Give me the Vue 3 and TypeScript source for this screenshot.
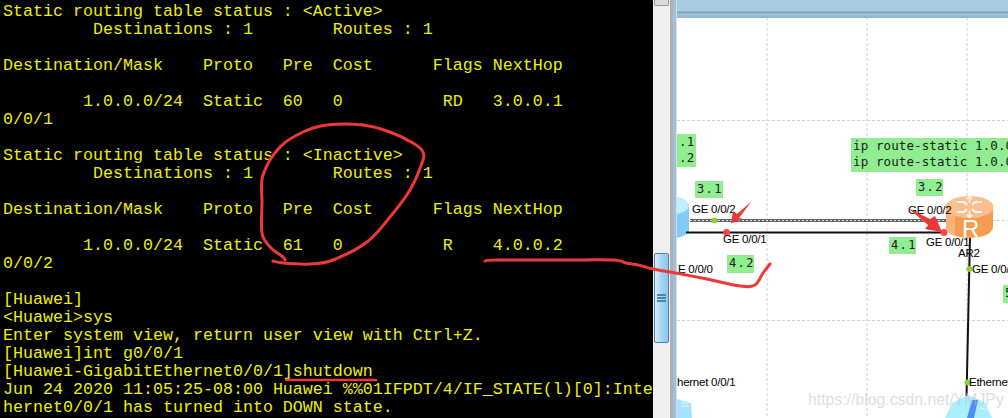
<script setup lang="ts">
const lines: string[] = [
  'Static routing table status : <Active>',
  '         Destinations : 1        Routes : 1',
  '',
  'Destination/Mask    Proto   Pre  Cost      Flags NextHop',
  '',
  '        1.0.0.0/24  Static  60   0          RD   3.0.0.1',
  '0/0/1',
  '',
  'Static routing table status : <Inactive>',
  '         Destinations : 1        Routes : 1',
  '',
  'Destination/Mask    Proto   Pre  Cost      Flags NextHop',
  '',
  '        1.0.0.0/24  Static  61   0          R    4.0.0.2',
  '0/0/2',
  '',
  '[Huawei]',
  '<Huawei>sys',
  'Enter system view, return user view with Ctrl+Z.',
  '[Huawei]int g0/0/1',
  '[Huawei-GigabitEthernet0/0/1]shutdown',
  'Jun 24 2020 11:05:25-08:00 Huawei %%01IFPDT/4/IF_STATE(l)[0]:Inte',
  'hernet0/0/1 has turned into DOWN state.'
]

interface Tag { text: string; x: number; y: number; w: number; h: number; wide?: boolean }
const tags: Tag[] = [
  { text: '.1\n.2', x: 677, y: 134, w: 19, h: 33 },
  { text: '3.1', x: 695, y: 181, w: 28, h: 17, wide: true },
  { text: '4.2', x: 727, y: 255, w: 27, h: 18, wide: true },
  { text: '3.2', x: 916, y: 179, w: 27, h: 17, wide: true },
  { text: '4.1', x: 889, y: 237, w: 27, h: 17, wide: true },
  { text: 'ip route-static 1.0.0.0 24 3.0.0.1\nip route-static 1.0.0.0 24 4.0.0.2', x: 851, y: 138, w: 157, h: 34 },
  { text: '5', x: 1003, y: 285, w: 5, h: 18 }
]

interface Port { text: string; x: number; y: number }
const ports: Port[] = [
  { text: 'GE 0/0/2', x: 692, y: 203 },
  { text: 'GE 0/0/1', x: 723, y: 233 },
  { text: 'E 0/0/0', x: 678, y: 263 },
  { text: 'GE 0/0/2', x: 908, y: 204 },
  { text: 'GE 0/0/1', x: 926, y: 236 },
  { text: 'AR2', x: 958, y: 247 },
  { text: 'GE 0/0/0', x: 972, y: 263 },
  { text: 'hernet 0/0/1', x: 677, y: 376 },
  { text: 'Ethernet 0/0/1', x: 969, y: 376 }
]

type Pt = [number, number]
// Catmull-Rom through the sampled points of a hand-drawn stroke
function smooth(p: Pt[]): string {
  let d = `M${p[0][0]} ${p[0][1]}`
  for (let i = 0; i < p.length - 1; i++) {
    const a = p[Math.max(i - 1, 0)]
    const b = p[i]
    const c = p[i + 1]
    const e = p[Math.min(i + 2, p.length - 1)]
    const c1x = b[0] + (c[0] - a[0]) / 6
    const c1y = b[1] + (c[1] - a[1]) / 6
    const c2x = c[0] - (e[0] - b[0]) / 6
    const c2y = c[1] - (e[1] - b[1]) / 6
    d += `C${c1x.toFixed(1)} ${c1y.toFixed(1)} ${c2x.toFixed(1)} ${c2y.toFixed(1)} ${c[0]} ${c[1]}`
  }
  return d
}
const circlePath = smooth([
  [273, 261], [283, 263], [310, 264], [333, 260], [367, 242], [390, 217], [410, 190],
  [422, 163], [423, 152], [413, 143], [390, 132], [363, 125], [327, 125], [303, 132],
  [280, 147], [263, 175], [262, 203], [262, 233], [270, 247], [283, 257], [285, 260]
])
const longPath = smooth([
  [485, 261], [495, 260], [560, 260], [613, 260], [626, 263], [640, 265.5], [653, 269],
  [673, 272.5], [707, 279], [740, 286], [755, 285], [763, 273], [770, 264]
])
</script>

<template>
  <div class="page">
    <pre class="terminal"><code v-for="(l, i) in lines" :key="i" class="line">{{ l }}</code></pre>
    <div class="scrollbar">
      <div class="thumb-top"></div>
      <div class="thumb">
        <span class="grip"></span><span class="grip"></span><span class="grip"></span>
      </div>
    </div>
    <div class="divider"></div>
    <div class="canvas">
      <div class="header"></div>
    </div>

    <svg class="diagram" width="1008" height="418" viewBox="0 0 1008 418">
      <g stroke="#d0d0d0" stroke-dasharray="3 2" fill="none">
        <path d="M767 18V418M867 18V418M967 18V418M677 120.5H1008M677 220.5H1008M677 320.5H1008" />
      </g>
      <!-- left router -->
      <path d="M677 197Q689 200 689 207V231Q687 236 677 238Z" fill="#7fcbff" />
      <path d="M677 197Q689 200 689 207Q687 212 677 214Z" fill="#c2edff" />
      <path d="M677 220.5H690" stroke="#bbb" stroke-width="1" />
      <!-- links -->
      <path d="M690 220.5H946" stroke="#666" stroke-width="3" />
      <path d="M690 220.5H946" stroke="#e4e4e4" stroke-width="1" stroke-dasharray="2 2" />
      <path d="M686 232.5H946" stroke="#111" stroke-width="2" />
      <path d="M970 236L966.5 398" stroke="#111" stroke-width="2" />
      <!-- AR2 router -->
      <path d="M946 207V227Q947 237 969.5 238Q992 237 993 227V207Z" fill="#f59c52" />
      <path d="M946 207V227Q947 234 955 236V214Z" fill="#f8b47a" />
      <ellipse cx="969.5" cy="207" rx="24" ry="11" fill="#fbc08e" />
      <g stroke="#fff" stroke-width="2" fill="none" opacity=".85">
        <path d="M957 202H964L967 205M957 212H964L967 209M982 202H975L972 205M982 212H975L972 209" />
        <path d="M967 199L969.5 196.5L972 199M969.5 197V203M967 215L969.5 217.5L972 215M969.5 217V211" stroke-width="1.6" />
      </g>
      <!-- switch icons -->
      <path d="M677 399L691 403L692 418H677Z" fill="#a5e4ff" />
      <path d="M681 403H689M681 406H689" stroke="#e2f6ff" />
      <path d="M945 418L952 403L968 395L985 402L992 418Z" fill="#aaeeff" />
      <path d="M967 418L972 400H978L974 418Z" fill="#4d90f0" />
      <path d="M979 402L990 405M980 408L990 410" stroke="#dff7ff" />
      <!-- port dots -->
      <circle cx="714.5" cy="220.5" r="3" fill="#8ccf3c" />
      <circle cx="726.5" cy="232.5" r="3.5" fill="#f44" />
      <circle cx="944" cy="232.5" r="3.5" fill="#f44" />
      <circle cx="969.5" cy="269" r="3" fill="#8ccf3c" />
      <circle cx="967.5" cy="382.5" r="3" fill="#8ccf3c" />
    </svg>

    <div
      v-for="t in tags"
      :key="t.text"
      class="tag"
      :class="{ wide: t.wide }"
      :style="{ left: t.x + 'px', top: t.y + 'px', width: t.w + 'px', height: t.h + 'px' }"
    >{{ t.text }}</div>
    <div class="router-letter">R</div>
    <div v-for="p in ports" :key="p.text + p.x" class="port" :style="{ left: p.x + 'px', top: p.y + 'px' }">{{ p.text }}</div>

    <svg class="ink" width="1008" height="418" viewBox="0 0 1008 418">
      <g fill="none" stroke="#ee3838" stroke-width="3" stroke-linecap="round" stroke-linejoin="round">
        <path :d="circlePath" />
        <path :d="longPath" />
        <path d="M286 380H376" stroke-width="2.4" />
      </g>
      <path d="M751.5 201.5L739 218L743 219L731 223.5L733 211L737 214Z" fill="#ee3838" />
      <path d="M908 208L930 219L935 216L942 232L925 229L928 225Z" fill="#ee3838" />
    </svg>
    <div class="watermark">https://blog.csdn.net/YMJPy</div>
  </div>
</template>

<style>
html, body { margin: 0; background: #000; }
</style>

<style scoped>
.page {
  position: relative;
  width: 1008px;
  height: 418px;
  overflow: hidden;
  display: flex;
  background: #000;
}
.terminal {
  width: 653px;
  flex: none;
  margin: 0;
  padding: 3px 0 0 3px;
  box-sizing: border-box;
  overflow: hidden;
  background: #000;
  color: #efef00;
  font-family: "Liberation Mono", monospace;
  font-size: 16.67px;
  line-height: 18px;
}
.line { display: block; height: 18px; font: inherit; white-space: pre; }
.scrollbar {
  width: 17px;
  flex: none;
  background: #efefef;
  position: relative;
}
.thumb-top {
  height: 5px;
  margin: 0 1px;
  background: #dcdcdc;
  border: 1px solid #9a9a9a;
  border-top: 0;
  border-radius: 0 0 2px 2px;
}
.thumb {
  position: absolute;
  top: 253px;
  left: 1px;
  width: 13px;
  height: 88px;
  border: 1px solid #4a83b0;
  border-radius: 2px;
  background: linear-gradient(90deg, #d9effb, #a4d5f2 50%, #8fc6ea);
  display: flex;
  flex-direction: column;
  justify-content: center;
  align-items: center;
  gap: 1px;
}
.grip { width: 9px; height: 2px; background: #4a86aa; }
.divider {
  width: 7px;
  flex: none;
  background: linear-gradient(90deg, #b0b0b0 0 3px, #9fbfdc 3px 6px, #d7dde4 6px);
}
.canvas { flex: 1; background: #fff; }
.header {
  height: 18px;
  background: linear-gradient(180deg, #a9cbe2 0 11px, #6f9cbc 12px, #a0c3dc 14px, #8db4d0);
}
.diagram, .ink { position: absolute; left: 0; top: 0; pointer-events: none; }
.tag {
  position: absolute;
  background: #90ee90;
  color: #1a1a1a;
  font-family: "DejaVu Sans Mono", monospace;
  font-size: 12.5px;
  line-height: 16px;
  padding: 0 0 0 2px;
  box-sizing: border-box;
  white-space: pre;
  overflow: hidden;
  letter-spacing: 0.1px;
}
.tag.wide {
  font-size: 12px;
  padding-left: 2px;
  letter-spacing: 1.4px;
  overflow: visible;
}
.port {
  position: absolute;
  font-family: "Liberation Sans", sans-serif;
  font-size: 11.5px;
  line-height: 13px;
  color: #000;
  white-space: nowrap;
  letter-spacing: -0.25px;
}
.router-letter {
  position: absolute;
  left: 962px;
  top: 215px;
  font-family: "Liberation Sans", sans-serif;
  font-size: 24px;
  line-height: 27px;
  color: #fff;
}
.watermark {
  position: absolute;
  left: 808px;
  top: 391px;
  font-family: "Liberation Sans", sans-serif;
  font-size: 15.8px;
  line-height: 18px;
  color: rgba(190, 190, 190, 0.5);
  white-space: nowrap;
}
</style>
